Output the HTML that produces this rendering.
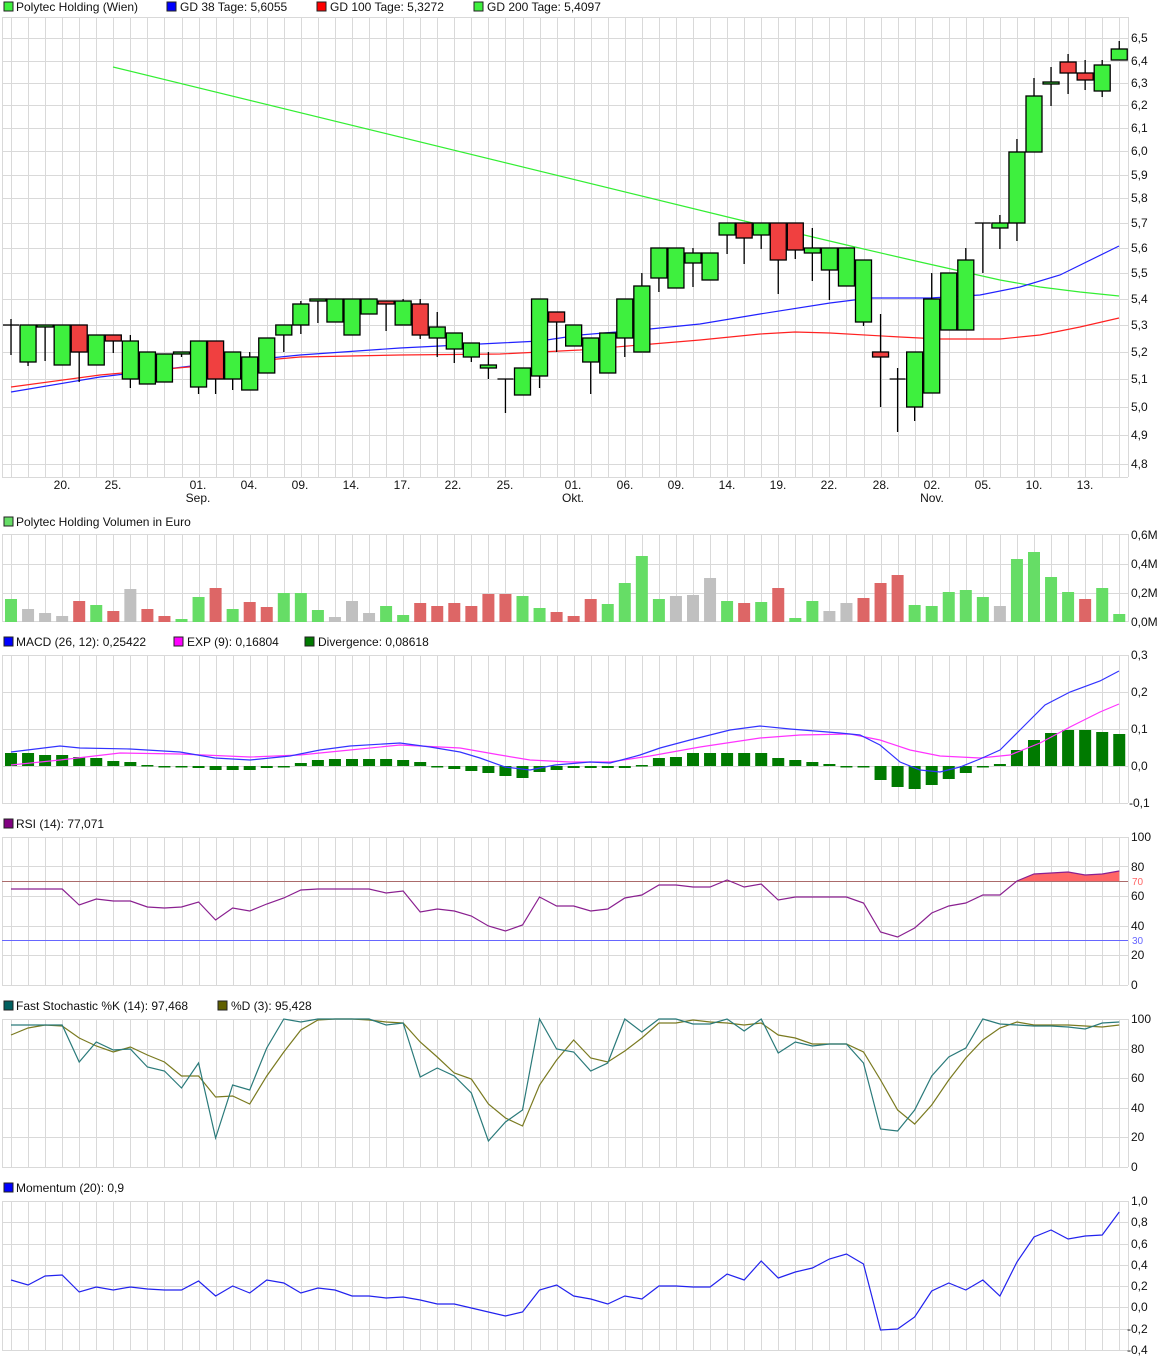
<!DOCTYPE html>
<html><head><meta charset="utf-8"><style>
html,body{margin:0;padding:0;background:#fff;}
svg{display:block;font-family:"Liberation Sans",sans-serif;font-size:12px;}
</style></head><body>
<svg id="s" width="1175" height="1361" xmlns="http://www.w3.org/2000/svg">
<g id="grid"></g>
<g id="shapes"></g>
<g fill="#111">
<rect x="4" y="2" width="9" height="9" fill="#3ef03e" stroke="#222"/><text x="16" y="11">Polytec Holding (Wien)</text>
<rect x="167" y="2" width="9" height="9" fill="#00f" stroke="#222"/><text x="180" y="11">GD 38 Tage: 5,6055</text>
<rect x="317" y="2" width="9" height="9" fill="#f00" stroke="#222"/><text x="330" y="11">GD 100 Tage: 5,3272</text>
<rect x="474" y="2" width="9" height="9" fill="#3ef03e" stroke="#222"/><text x="487" y="11">GD 200 Tage: 5,4097</text>
<g font-size="12">
<text x="1131" y="42">6,5</text><text x="1131" y="65">6,4</text><text x="1131" y="87">6,3</text><text x="1131" y="109">6,2</text><text x="1131" y="132">6,1</text><text x="1131" y="155">6,0</text><text x="1131" y="179">5,9</text><text x="1131" y="202">5,8</text><text x="1131" y="227">5,7</text><text x="1131" y="252">5,6</text><text x="1131" y="277">5,5</text><text x="1131" y="303">5,4</text><text x="1131" y="329">5,3</text><text x="1131" y="356">5,2</text><text x="1131" y="383">5,1</text><text x="1131" y="411">5,0</text><text x="1131" y="439">4,9</text><text x="1131" y="468">4,8</text>
</g>
<g text-anchor="middle">
<text x="62" y="489">20.</text><text x="113" y="489">25.</text><text x="198" y="489">01.</text><text x="198" y="502">Sep.</text><text x="249" y="489">04.</text><text x="300" y="489">09.</text><text x="351" y="489">14.</text><text x="402" y="489">17.</text><text x="453" y="489">22.</text><text x="505" y="489">25.</text><text x="573" y="489">01.</text><text x="573" y="502">Okt.</text><text x="625" y="489">06.</text><text x="676" y="489">09.</text><text x="727" y="489">14.</text><text x="778" y="489">19.</text><text x="829" y="489">22.</text><text x="881" y="489">28.</text><text x="932" y="489">02.</text><text x="932" y="502">Nov.</text><text x="983" y="489">05.</text><text x="1034" y="489">10.</text><text x="1085" y="489">13.</text>
</g>
<rect x="4" y="517" width="9" height="9" fill="#66dd66" stroke="#222"/><text x="16" y="526">Polytec Holding Volumen in Euro</text>
<text x="1131" y="539">0,6M</text><text x="1131" y="568">0,4M</text><text x="1131" y="597">0,2M</text><text x="1131" y="626">0,0M</text>
<rect x="4" y="637" width="9" height="9" fill="#00f" stroke="#222"/><text x="16" y="646">MACD (26, 12): 0,25422</text>
<rect x="174" y="637" width="9" height="9" fill="#f0f" stroke="#222"/><text x="187" y="646">EXP (9): 0,16804</text>
<rect x="305" y="637" width="9" height="9" fill="#007a00" stroke="#222"/><text x="318" y="646">Divergence: 0,08618</text>
<text x="1131" y="659">0,3</text><text x="1131" y="696">0,2</text><text x="1131" y="733">0,1</text><text x="1131" y="770">0,0</text><text x="1129" y="807">-0,1</text>
<rect x="4" y="819" width="9" height="9" fill="#800080" stroke="#222"/><text x="16" y="828">RSI (14): 77,071</text>
<text x="1131" y="841">100</text><text x="1131" y="871">80</text><text x="1131" y="900">60</text><text x="1131" y="930">40</text><text x="1131" y="959">20</text><text x="1131" y="989">0</text>
<text x="1132" y="885" font-size="10" fill="#f66">70</text><text x="1132" y="944" font-size="10" fill="#66f">30</text>
<rect x="4" y="1001" width="9" height="9" fill="#006060" stroke="#222"/><text x="16" y="1010">Fast Stochastic %K (14): 97,468</text>
<rect x="218" y="1001" width="9" height="9" fill="#606000" stroke="#222"/><text x="231" y="1010">%D (3): 95,428</text>
<text x="1131" y="1023">100</text><text x="1131" y="1053">80</text><text x="1131" y="1082">60</text><text x="1131" y="1112">40</text><text x="1131" y="1141">20</text><text x="1131" y="1171">0</text>
<rect x="4" y="1183" width="9" height="9" fill="#00f" stroke="#222"/><text x="16" y="1192">Momentum (20): 0,9</text>
<text x="1131" y="1205">1,0</text><text x="1131" y="1226">0,8</text><text x="1131" y="1248">0,6</text><text x="1131" y="1269">0,4</text><text x="1131" y="1290">0,2</text><text x="1131" y="1311">0,0</text><text x="1127" y="1333">-0,2</text><text x="1127" y="1354">-0,4</text>
</g>
</svg>
<script>
(function(){
var NS="http://www.w3.org/2000/svg";
var G=document.getElementById("grid"),S=document.getElementById("shapes");
function el(p,t,a){var e=document.createElementNS(NS,t);for(var k in a)e.setAttribute(k,a[k]);p.appendChild(e);return e;}
function X(i){return 11+i*17.05;}
var gc="#d9d9d9";
function panel(top,bot,hs){
 var g="";
 for(var i=0;i<66;i++){var x=Math.round(X(i))+0.5;g+="M"+x+" "+top+"V"+bot;}
 g+="M2.5 "+top+"V"+bot+"M1128.5 "+top+"V"+bot;
 hs.forEach(function(y){g+="M2 "+(y+0.5)+"H1128";});
 el(G,"path",{d:g,stroke:gc,"stroke-width":1,fill:"none"});
}
panel(17,477,[17,38,61,83,105,128,151,175,198,223,248,273,299,325,352,379,407,435,464,477]);
panel(534,622,[534,564,593,621]);
panel(655,803,[655,692,729,766,803]);
panel(837,985,[837,866,896,926,955,985]);
panel(1019,1167,[1019,1049,1078,1108,1137,1167]);
panel(1201,1350,[1201,1222,1244,1265,1286,1307,1329,1350]);
function line(pts,c,w){var d="";pts.forEach(function(p,i){d+=(i?"L":"M")+p[0]+" "+p[1];});el(S,"path",{d:d,stroke:c,"stroke-width":w||1.2,fill:"none"});}
function series(arr,c,w){line(arr.map(function(y,i){return[X(i),y];}),c,w);}
line([[113,67],[740,220],[800,234],[855,247],[920,262],[960,271],[1000,280],[1040,287],[1080,292],[1119,296]],"#33ee33");
line([[11,392],[100,377],[200,365],[300,355],[400,348],[500,343],[540,341],[580,335],[640,330],[700,324],[760,314],[830,303],[870,298],[930,298],[980,295],[1020,287],[1060,275],[1119,246]],"#2222ff");
line([[11,387],[100,375],[200,366],[300,357],[400,355],[500,354],[580,350],[640,345],[700,340],[760,334],[795,332],[830,333],[900,337],[940,339],[1000,339],[1040,335],[1080,327],[1119,318]],"#ff2222");
var C=[[325,325,319,355,'d'],[325,362,325,366,'g'],[325,327,325,361,'g'],[325,365,325,365,'g'],[325,352,325,382,'r'],[335,365,335,365,'g'],[335,341,335,353,'r'],[341,379,335,388,'g'],[352,384,352,384,'g'],[354,382,354,382,'g'],[352,354,352,357,'g'],[341,387,341,394,'g'],[341,379,341,394,'r'],[352,379,352,390,'g'],[357,390,352,390,'g'],[338,373,338,373,'g'],[325,335,325,352,'g'],[304,325,301,334,'g'],[299,301,299,323,'g'],[299,322,299,322,'g'],[299,335,299,335,'g'],[299,314,299,314,'g'],[301,304,301,331,'r'],[301,325,299,325,'g'],[304,335,299,339,'r'],[327,338,312,357,'g'],[333,349,333,363,'g'],[343,357,343,362,'g'],[365,368,352,379,'g'],[379,379,379,413,'d'],[368,395,368,395,'g'],[299,376,299,388,'g'],[312,322,312,352,'r'],[325,346,325,346,'g'],[338,362,338,394,'g'],[333,373,333,373,'g'],[299,338,299,357,'g'],[286,352,273,352,'g'],[248,278,248,292,'g'],[248,288,248,288,'g'],[253,263,248,287,'g'],[253,280,253,280,'g'],[223,235,223,254,'g'],[223,238,223,264,'r'],[223,235,223,249,'g'],[223,260,223,294,'r'],[223,250,223,259,'r'],[248,253,228,281,'g'],[248,270,248,300,'g'],[248,286,248,286,'g'],[260,322,260,326,'g'],[352,357,314,407,'r'],[379,379,368,432,'d'],[352,407,352,421,'g'],[299,393,273,393,'g'],[273,330,273,330,'g'],[260,330,248,330,'g'],[223,223,223,273,'d'],[223,228,215,249,'g'],[152,223,139,241,'g'],[96,152,78,152,'g'],[82,84,67,106,'g'],[62,73,54,94,'r'],[73,80,60,90,'r'],[65,91,60,97,'g'],[49,60,41,60,'g']];
C.forEach(function(c,i){var x=X(i);
 el(S,"line",{x1:x,x2:x,y1:c[2],y2:c[3],stroke:"#000","stroke-width":1.3});
 if(c[4]=='d'){el(S,"line",{x1:x-8,x2:x+8,y1:c[0],y2:c[0],stroke:"#000","stroke-width":1.3});}
 else el(S,"rect",{x:x-8,y:c[0],width:16,height:Math.max(c[1]-c[0],2),fill:c[4]=='g'?"#3ef03e":"#f04040",stroke:"#000","stroke-width":1.3});
});
var V=[[599,'g'],[609,'x'],[613,'x'],[616,'x'],[601,'r'],[605,'g'],[611,'r'],[589,'x'],[609,'r'],[616,'r'],[619,'g'],[597,'g'],[588,'r'],[609,'g'],[602,'r'],[607,'r'],[593,'g'],[593,'g'],[610,'g'],[617,'x'],[601,'x'],[613,'x'],[606,'g'],[615,'g'],[603,'r'],[606,'r'],[603,'r'],[606,'r'],[594,'r'],[594,'r'],[596,'g'],[608,'g'],[612,'r'],[616,'r'],[599,'r'],[604,'g'],[583,'g'],[556,'g'],[599,'g'],[596,'x'],[595,'x'],[578,'x'],[601,'g'],[603,'r'],[602,'g'],[588,'r'],[618,'g'],[601,'g'],[611,'x'],[603,'x'],[598,'r'],[583,'r'],[575,'r'],[605,'g'],[606,'g'],[592,'g'],[590,'g'],[597,'g'],[606,'x'],[559,'g'],[552,'g'],[577,'g'],[592,'g'],[599,'r'],[588,'g'],[614,'g']];
var vc={g:"#66dd66",r:"#dd6666",x:"#c0c0c0"};
V.forEach(function(v,i){el(S,"rect",{x:X(i)-6,y:v[0],width:12,height:622-v[0],fill:vc[v[1]]});});
var D=[753,753,755,755,757,758,761,762,765,766,767,768,770,770,770,768,766,763,760,759,759,759,759,760,762,766,769,771,773,776,778,772,770,768,768,768,768,765,758,757,753,753,753,753,753,758,760,762,764,766,767,780,787,789,785,779,773,767,764,750,740,733,730,730,732,734];
D.forEach(function(y,i){var t=Math.min(y,766),b=Math.max(y,766);el(S,"rect",{x:X(i)-6,y:t,width:12,height:Math.max(b-t,1.5),fill:"#007a00"});});
line([[11,765],[60,760],[120,753],[180,754],[250,757],[300,755],[350,750],[400,745],[460,748],[500,755],[530,760],[570,762],[610,762],[650,756],[700,747],[760,738],[800,735],[850,734],[880,740],[910,750],[940,756],[980,758],[1010,755],[1040,743],[1070,727],[1100,712],[1119,704]],"#ff33ff");
line([[11,752],[60,746],[80,748],[130,749],[180,752],[215,758],[250,760],[290,756],[320,750],[350,746],[400,743],[430,747],[460,752],[480,758],[505,767],[530,770],[555,765],[590,762],[610,763],[640,755],[660,748],[690,740],[730,730],[760,726],[790,729],[840,733],[860,735],[880,745],[900,762],[920,770],[940,772],[960,767],[980,759],[1000,750],[1020,730],[1045,705],[1070,692],[1100,681],[1119,671]],"#3333ff");
var R=[889,889,889,889,905,899,901,901,907,908,907,902,920,908,911,904,898,890,889,889,889,889,893,891,912,909,911,916,926,931,925,897,906,906,911,909,898,895,885,885,887,887,880,887,884,900,897,897,897,897,903,932,937,928,913,906,903,895,895,881,874,873,872,875,874,871];
var f="M"+X(59)+" 881";for(var i=59;i<66;i++)f+="L"+X(i)+" "+Math.min(R[i],881);f+="L"+X(65)+" 881Z";
el(S,"path",{d:f,fill:"#ff6666"});
el(S,"line",{x1:2,x2:1128,y1:881.5,y2:881.5,stroke:"#e06060","stroke-width":1});
el(S,"line",{x1:2,x2:1128,y1:940.5,y2:940.5,stroke:"#6666ff","stroke-width":1});
el(S,"line",{x1:2,x2:1128,y1:881.5,y2:881.5,stroke:"#777","stroke-width":0.6});
series(R,"#8a2090");
var K=[1025,1025,1025,1025,1062,1042,1050,1049,1067,1071,1088,1063,1138,1085,1090,1048,1019,1022,1019,1019,1019,1019,1025,1023,1077,1068,1076,1093,1141,1122,1110,1019,1049,1052,1071,1063,1019,1032,1019,1019,1024,1024,1019,1031,1019,1053,1042,1046,1044,1044,1063,1129,1131,1110,1076,1057,1048,1019,1024,1025,1026,1026,1027,1029,1023,1022];
var Dd=[1035,1028,1025,1026,1038,1046,1052,1047,1055,1062,1076,1076,1097,1096,1104,1076,1052,1030,1020,1019,1019,1020,1022,1023,1042,1057,1073,1079,1104,1118,1126,1085,1060,1040,1058,1062,1051,1038,1023,1023,1020,1022,1023,1025,1023,1035,1038,1044,1044,1044,1052,1080,1110,1124,1105,1080,1058,1040,1028,1022,1025,1025,1025,1026,1027,1025];
series(Dd,"#7a7a20");
series(K,"#2a7a7a");
var M=[1280,1285,1276,1275,1292,1287,1290,1287,1289,1290,1290,1281,1296,1286,1293,1280,1283,1293,1288,1290,1296,1296,1298,1297,1300,1304,1304,1308,1312,1316,1312,1290,1285,1296,1299,1304,1296,1299,1286,1286,1287,1287,1274,1280,1261,1278,1272,1268,1259,1254,1264,1330,1329,1317,1291,1283,1290,1280,1296,1262,1237,1230,1239,1236,1235,1212];
series(M,"#2222ee");
})();
</script>
</body></html>
